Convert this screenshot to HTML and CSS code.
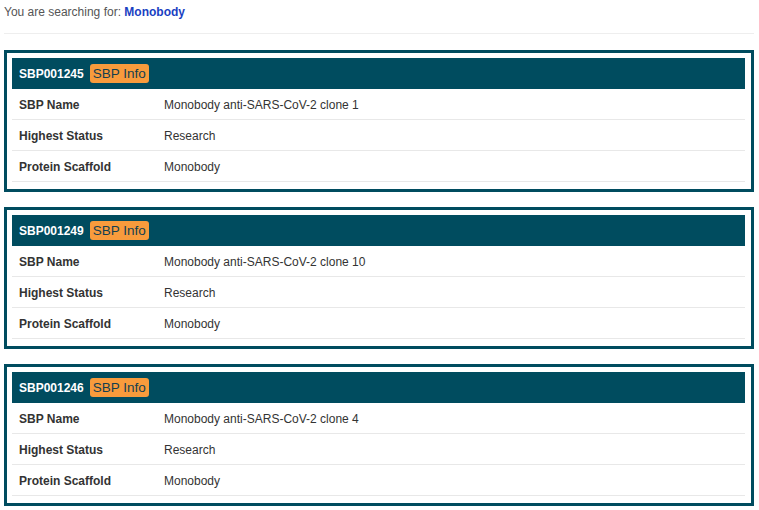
FILE: index.html
```html
<!DOCTYPE html>
<html lang="en">
<head>
  <meta charset="UTF-8" />
  <meta name="viewport" content="width=device-width, initial-scale=1.0" />
  <title>SBP Search – Monobody</title>
  <link rel="stylesheet" href="styles.css">
</head>
<body>
  <div class="page">
    <!-- SEARCH TERM -->
    <p class="search-line">You are searching for: <strong>Monobody</strong></p>
    <hr class="divider">

    <!-- RESULTS -->
    <div class="result-card">
      <table class="result-table">
        <tr class="result-head">
          <th colspan="2"><span class="sbp-id">SBP001245</span><a class="badge" href="#">SBP Info</a></th>
        </tr>
        <tr><td class="label">SBP Name</td><td>Monobody anti-SARS-CoV-2 clone 1</td></tr>
        <tr><td class="label">Highest Status</td><td>Research</td></tr>
        <tr><td class="label">Protein Scaffold</td><td>Monobody</td></tr>
      </table>
    </div>

    <div class="result-card">
      <table class="result-table">
        <tr class="result-head">
          <th colspan="2"><span class="sbp-id">SBP001249</span><a class="badge" href="#">SBP Info</a></th>
        </tr>
        <tr><td class="label">SBP Name</td><td>Monobody anti-SARS-CoV-2 clone 10</td></tr>
        <tr><td class="label">Highest Status</td><td>Research</td></tr>
        <tr><td class="label">Protein Scaffold</td><td>Monobody</td></tr>
      </table>
    </div>

    <div class="result-card">
      <table class="result-table">
        <tr class="result-head">
          <th colspan="2"><span class="sbp-id">SBP001246</span><a class="badge" href="#">SBP Info</a></th>
        </tr>
        <tr><td class="label">SBP Name</td><td>Monobody anti-SARS-CoV-2 clone 4</td></tr>
        <tr><td class="label">Highest Status</td><td>Research</td></tr>
        <tr><td class="label">Protein Scaffold</td><td>Monobody</td></tr>
      </table>
    </div>
  </div>
</body>
</html>
```

FILE: styles.css
```css
/* GLOBAL */
body { font-family: 'Liberation Sans', Arial, sans-serif; font-size:12px; margin:0; padding:0; background:#fff; color:#333; }
.page { padding:0 5px 0 4px; }

/* SEARCH TERM */
.search-line { margin:0; padding-top:5px; line-height:15px; color:#555; }
.search-line strong { color:#1a3fc2; }
.divider { border:0; border-top:1px solid #eee; margin:13px 0 16px; }

/* RESULT CARDS */
.result-card { border:3px solid #004c5f; padding:5px 6px 7px 5px; margin-bottom:15px; }
.result-table { width:100%; border-collapse:collapse; }
.result-table td { height:29px; padding:1px 7px 0; text-align:left; vertical-align:middle;
  border-bottom:1px solid #e8e8e8; color:#333; }
.result-table td.label { width:131px; font-weight:bold; }

.result-head th { background:#004c5f; color:#fff; height:31px; padding:0 7px; text-align:left; vertical-align:middle; }
.sbp-id { font-weight:bold; margin-right:6px; vertical-align:middle; }
.result-head .badge { display:inline-block; vertical-align:middle; background:#f89b3c; color:#123f50; font-weight:normal;
  font-size:13.5px; line-height:19px; padding:0 3px; border-radius:3px; text-decoration:none; }
```
